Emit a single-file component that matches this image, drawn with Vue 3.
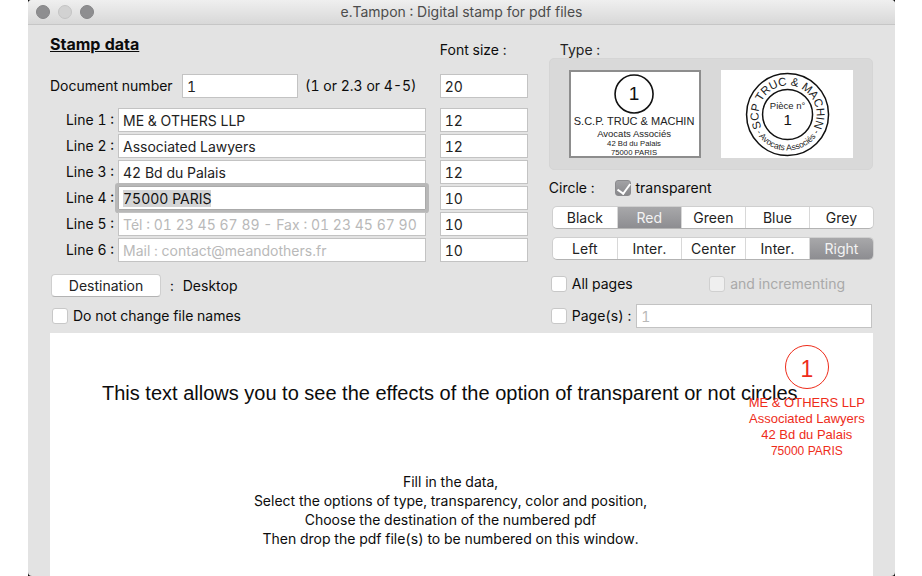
<script setup>
import { onMounted, reactive, ref } from 'vue'

const documentNumber = ref('1')
const documentSize = ref('20')
const lines = reactive([
  { value: 'ME & OTHERS LLP', placeholder: '', size: '12' },
  { value: 'Associated Lawyers', placeholder: '', size: '12' },
  { value: '42 Bd du Palais', placeholder: '', size: '12' },
  { value: '75000 PARIS', placeholder: '', size: '10' },
  { value: '', placeholder: 'Tél : 01 23 45 67 89 - Fax : 01 23 45 67 90', size: '10' },
  { value: '', placeholder: 'Mail : contact@meandothers.fr', size: '10' },
])
const colors = ['Black', 'Red', 'Green', 'Blue', 'Grey']
const positions = ['Left', 'Inter.', 'Center', 'Inter.', 'Right']
const color = ref(1)
const position = ref(4)
const stampType = ref(0)
const transparent = ref(true)
const keepNames = ref(false)
const allPages = ref(false)
const incrementing = ref(false)
const somePages = ref(false)
const pages = ref('')
const lineInputs = ref([])

onMounted(() => {
  const input = lineInputs.value[3]
  input.focus()
  input.select()
})
</script>

<template>
  <div class="frame">
    <main class="window">
      <header class="titlebar">
        <div class="lights">
          <button class="light" aria-label="Close"></button>
          <button class="light off" aria-label="Minimize"></button>
          <button class="light" aria-label="Zoom"></button>
        </div>
        <span class="title">e.Tampon : Digital stamp for pdf files</span>
      </header>

      <div class="content">
        <div class="settings">
          <section class="data">
            <div class="row heading">
              <h1>Stamp data</h1>
              <span class="size-title">Font size :</span>
            </div>
            <div class="row document">
              <label class="doc-label" for="doc">Document number</label>
              <input id="doc" v-model="documentNumber" class="field number" type="text" />
              <span class="hint">(1 or 2.3 or 4-5)</span>
              <input v-model="documentSize" class="field size" type="text" aria-label="Document number font size" />
            </div>
            <div class="lines">
              <div v-for="(line, i) in lines" :key="i" class="row">
                <label class="line-label" :for="'line' + i">Line {{ i + 1 }} :</label>
                <input :id="'line' + i" ref="lineInputs" v-model="line.value" class="field text" type="text" :placeholder="line.placeholder" />
                <input v-model="line.size" class="field size" type="text" :aria-label="'Line ' + (i + 1) + ' font size'" />
              </div>
            </div>
            <div class="row destination">
              <button class="push">Destination</button>
              <span>:</span>
              <span>Desktop</span>
            </div>
            <label class="row check">
              <input v-model="keepNames" type="checkbox" />
              <span>Do not change file names</span>
            </label>
          </section>

          <section class="options">
            <h2>Type :</h2>
            <div class="types">
              <button class="type" :class="{ chosen: stampType === 0 }" @click="stampType = 0">
                <svg viewBox="0 0 132 88" font-family="'Liberation Sans', Arial, sans-serif" text-anchor="middle" fill="#222">
                  <circle cx="65" cy="24" r="19" fill="none" stroke="#111" stroke-width="1.6" />
                  <text x="65" y="30" font-size="19" fill="#111">1</text>
                  <text x="65" y="55" font-size="11">S.C.P. TRUC &amp; MACHIN</text>
                  <text x="65" y="67" font-size="9.5">Avocats Associés</text>
                  <text x="65" y="76" font-size="7.7">42 Bd du Palais</text>
                  <text x="65" y="85" font-size="7.7">75000 PARIS</text>
                </svg>
              </button>
              <button class="type" :class="{ chosen: stampType === 1 }" @click="stampType = 1">
                <svg viewBox="0 0 132 88" font-family="'Liberation Sans', Arial, sans-serif" text-anchor="middle" fill="#222">
                  <defs>
                    <path id="arc-top" d="M 37.5 44.5 A 29 29 0 1 1 95.5 44.5 A 29 29 0 0 1 66.5 73.5" transform="rotate(-45 66.5 44.5)" />
                    <path id="arc-bottom" d="M 30.5 44.5 A 36 36 0 0 0 102.5 44.5" />
                  </defs>
                  <circle cx="66.5" cy="44.5" r="41" fill="none" stroke="#111" stroke-width="1.5" />
                  <circle cx="66.5" cy="44.5" r="25" fill="none" stroke="#111" stroke-width="1.5" />
                  <text font-size="11.5"><textPath href="#arc-top" startOffset="50%">SCP TRUC &amp; MACHIN</textPath></text>
                  <text font-size="8.5"><textPath href="#arc-bottom" startOffset="50%">- Avocats Associés -</textPath></text>
                  <text x="66.5" y="39" font-size="9.5">Pièce n°</text>
                  <text x="66.5" y="55" font-size="15" fill="#111">1</text>
                </svg>
              </button>
            </div>
            <div class="row circle">
              <span>Circle :</span>
              <label class="check">
                <input v-model="transparent" type="checkbox" />
                <span>transparent</span>
              </label>
            </div>
            <div class="segments">
              <button v-for="(name, i) in colors" :key="i" :class="{ on: color === i }" @click="color = i">{{ name }}</button>
            </div>
            <div class="segments">
              <button v-for="(name, i) in positions" :key="i" :class="{ on: position === i }" @click="position = i">{{ name }}</button>
            </div>
            <div class="row scope">
              <label class="check">
                <input v-model="allPages" type="checkbox" />
                <span>All pages</span>
              </label>
              <label class="check disabled">
                <input v-model="incrementing" type="checkbox" disabled />
                <span>and incrementing</span>
              </label>
            </div>
            <div class="row pages">
              <label class="check">
                <input v-model="somePages" type="checkbox" />
                <span>Page(s) :</span>
              </label>
              <input v-model="pages" class="field text" type="text" placeholder="1" aria-label="Pages" />
            </div>
          </section>
        </div>

        <section class="preview">
          <p class="sample">This text allows you to see the effects of the option of transparent or not circles</p>
          <p class="help">
            Fill in the data,<br />
            Select the options of type, transparency, color and position,<br />
            Choose the destination of the numbered pdf<br />
            Then drop the pdf file(s) to be numbered on this window.
          </p>
          <div class="stamp">
            <span class="ring">1</span>
            <span>ME &amp; OTHERS LLP</span>
            <span>Associated Lawyers</span>
            <span>42 Bd du Palais</span>
            <span class="small">75000 PARIS</span>
          </div>
        </section>
      </div>
    </main>
  </div>
</template>

<style>
body {
  background: #fff;
}
</style>

<style scoped>
* {
  box-sizing: border-box;
}

.frame {
  margin: 0 27px 0 28px;
  background: #111;
  font: 14px/20px Inter, Roboto, sans-serif;
  font-variant-numeric: tabular-nums;
  color: #0c0c0c;
}

.window {
  display: flex;
  flex-direction: column;
  min-height: 100vh;
  border-radius: 4px;
  background: #e3e3e3;
  overflow: hidden;
}

.titlebar {
  display: grid;
  grid-template-columns: 1fr auto 1fr;
  align-items: center;
  height: 25px;
  padding: 0 8px;
  border-bottom: 1px solid #c6c6c6;
  background: linear-gradient(#efefef, #d8d8d8);
}

.title {
  color: #4c4c4c;
}

.lights {
  display: flex;
  gap: 8px;
}

.light {
  width: 14px;
  height: 14px;
  padding: 0;
  border: 1px solid #858587;
  border-radius: 50%;
  background: #8e8e90;
}

.light.off {
  border-color: #c4c4c4;
  background: #d2d2d2;
}

.content {
  display: flex;
  flex: 1;
  flex-direction: column;
  gap: 5px;
  padding: 0 22px;
}

.settings {
  display: grid;
  grid-template-columns: minmax(0, 28fr) minmax(0, 19fr);
  gap: 21px;
}

.row {
  display: flex;
  align-items: center;
}

.heading {
  justify-content: space-between;
  height: 49px;
}

h1 {
  margin: 0 0 12px;
  font-size: 16px;
  line-height: 20px;
  font-weight: 700;
  text-decoration: underline;
}

.size-title {
  width: 88px;
}

.document {
  gap: 7px;
}

.doc-label {
  min-width: 125px;
  white-space: nowrap;
}

.number {
  width: 116px;
}

.hint {
  flex: 1;
  white-space: nowrap;
}

.field {
  height: 24px;
  min-width: 0;
  padding: 0 4px;
  border: 1px solid #c3c3c3;
  border-radius: 0;
  outline: 0;
  background: #fff;
  color: #222;
  font: inherit;
  font-variant-numeric: inherit;
}

.field::placeholder {
  color: #b9b9b9;
  opacity: 1;
}

.field::selection {
  background: #d4d5d6;
  color: #111;
}

.field.text {
  flex: 1;
}

.field.text:focus {
  box-shadow: 0 0 0 3px #b8b8b8;
  border-color: #aaa;
  border-radius: 1px;
}

.size {
  flex: none;
  width: 88px;
}

.lines {
  display: grid;
  gap: 2px;
  padding-top: 10px;
}

.line-label {
  width: 68px;
  padding-right: 4px;
  text-align: right;
}

.lines .size {
  margin-left: 14px;
}

.destination {
  gap: 9px;
  padding: 12px 0 0 1px;
}

.push {
  width: 110px;
  height: 23px;
  padding: 0;
  border: 1px solid #cfcfcf;
  border-bottom-color: #b3b3b3;
  border-radius: 4px;
  background: #fff;
  color: #222;
  font: inherit;
}

.check {
  display: flex;
  align-items: center;
  gap: 5px;
  white-space: nowrap;
}

.data > .check {
  padding: 9px 0 0 2px;
}

.check input {
  appearance: none;
  display: grid;
  width: 16px;
  height: 16px;
  margin: 0;
  border: 1px solid #c8c8c8;
  border-radius: 3px;
  background: #fff;
}

.check input:checked {
  border-color: #8b8b8e;
  background: linear-gradient(#a2a2a5, #88888b);
}

.check input:checked::after {
  content: '';
  width: 6px;
  height: 11px;
  margin: 0 0 0 4px;
  border: solid #fff;
  border-width: 0 2px 2px 0;
  transform: rotate(36deg);
}

.check.disabled {
  color: #a9a9a9;
}

.check.disabled input {
  border-color: #d0d0d0;
  background: #efefef;
}

.options {
  padding-top: 15px;
}

h2 {
  margin: 0 0 0 11px;
  color: #222;
  font-size: 14px;
  line-height: 20px;
  font-weight: 400;
}

.types {
  display: grid;
  grid-template-columns: 1fr 1fr;
  gap: 20px;
  margin-top: -2px;
  padding: 11px 19px;
  border: 1px solid #d5d5d5;
  border-radius: 5px;
  background: #d9d9d9;
}

.type {
  height: 88px;
  padding: 0;
  border: 0;
  background: #fff;
}

.type.chosen {
  box-shadow: inset 0 0 0 2px #8d8d8d;
}

.type svg {
  display: block;
  width: 100%;
  height: 100%;
}

.circle {
  gap: 20px;
  padding: 8px 0;
}

.segments {
  display: grid;
  grid-template-columns: repeat(5, 1fr);
  height: 23px;
  margin: 0 -1px 8px 3px;
  border: 1px solid #cfcfcf;
  border-bottom-color: #b3b3b3;
  border-radius: 5px;
  background: #fff;
  overflow: hidden;
}

.segments button {
  padding: 0;
  border: 0;
  border-left: 1px solid #d8d8d8;
  background: transparent;
  color: #222;
  font: inherit;
}

.segments button:first-child {
  border-left: 0;
}

.segments button.on {
  background: linear-gradient(#a8a8aa, #8d8d91);
  color: #f3f3f3;
}

.scope {
  justify-content: space-between;
  padding: 6px 28px 0 2px;
}

.pages {
  gap: 5px;
  padding: 10px 1px 0 2px;
}

.preview {
  position: relative;
  flex: 1;
  padding: 48px 22px 24px 0;
  background: #fff;
}

.sample {
  margin: 0;
  padding-left: 52px;
  font: 20px/24px 'Liberation Sans', Arial, sans-serif;
  white-space: nowrap;
}

.help {
  margin: 67px 0 0;
  line-height: 19px;
  text-align: center;
}

.stamp {
  position: absolute;
  top: 12px;
  right: 8px;
  display: flex;
  flex-direction: column;
  align-items: center;
  color: #ee2c1a;
  font: 13px/16px 'Liberation Sans', Arial, sans-serif;
}

.ring {
  width: 44px;
  height: 44px;
  margin-bottom: 6px;
  border: 1px solid #ee2c1a;
  border-radius: 50%;
  font-size: 23px;
  line-height: 46px;
  text-align: center;
}

.small {
  font-size: 12px;
}
</style>
